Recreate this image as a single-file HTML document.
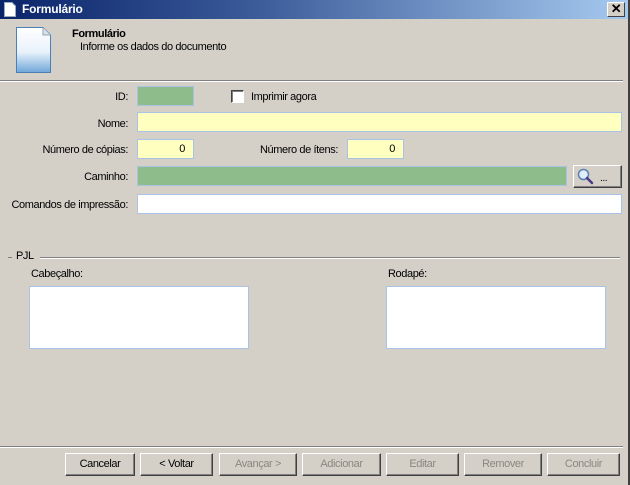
<!DOCTYPE html>
<html><head><meta charset="utf-8"><style>
*{margin:0;padding:0;box-sizing:border-box}
body{width:630px;height:485px;background:#d4d0c8;font-family:"Liberation Sans",sans-serif;font-size:11px;letter-spacing:-0.4px;color:#000;position:relative;overflow:hidden}
.a{position:absolute}
.t{position:absolute;white-space:nowrap;line-height:13px}
.r{text-align:right}
.in{position:absolute;border:1px solid #a9c3e6;height:20px;text-align:right;padding-right:8px;line-height:18px}
.g{background:#8fbc8b}.y{background:#ffffc0}.w{background:#fff}
.btn{position:absolute;top:453px;height:23px;border:1px solid;border-color:#fff #404040 #404040 #fff;box-shadow:inset -1px -1px 0 #808080;text-align:center;line-height:20px}
.dis{color:#8a8780}
</style></head><body>
<div class="a" style="left:0;top:0;width:630px;height:19px;background:linear-gradient(90deg,#0a246a,#3a5a98 40%,#a6caf0)"></div>
<svg class="a" style="left:4px;top:2px" width="12" height="15"><path d="M0.5 0.5H8L11.5 4V14.5H0.5Z" fill="#fff" stroke="#9ab"/></svg>
<div class="t" style="left:22px;top:3px;color:#fff;font-weight:bold;font-size:12px;letter-spacing:-0.2px">Formulário</div>
<div class="a" style="left:607px;top:2px;width:18px;height:15px;background:#d4d0c8;border:1px solid;border-color:#fff #404040 #404040 #fff;text-align:center;font-size:13px;line-height:12px;font-weight:bold">✕</div>
<div class="a" style="left:628px;top:0;width:2px;height:485px;background:#404040"></div>
<svg class="a" style="left:15px;top:26px" width="38" height="48"><defs><linearGradient id="d" x1="0" y1="0" x2="0" y2="1"><stop offset="0" stop-color="#fff"/><stop offset=".55" stop-color="#e8f2fb"/><stop offset="1" stop-color="#6fa6d8"/></linearGradient></defs><path d="M1.5 1.5H28L35.5 9V46.5H1.5Z" fill="url(#d)" stroke="#4a7fb8"/><path d="M28 1.5V9H35.5" fill="#dde" stroke="#8aa"/></svg>
<div class="t" style="left:72px;top:28px;font-weight:bold">Formulário</div>
<div class="t" style="left:80px;top:41px">Informe os dados do documento</div>
<div class="a" style="left:0;top:80px;width:623px;height:1px;background:#808080"></div>
<div class="a" style="left:0;top:81px;width:623px;height:1px;background:#fff"></div>

<div class="t r" style="left:0;width:128px;top:91px">ID:</div>
<div class="in g" style="left:137px;top:86px;width:57px"></div>
<div class="a" style="left:231px;top:90px;width:13px;height:13px;background:#fff;border:1px solid;border-color:#404040 #fff #fff #404040;box-shadow:inset 1px 1px 0 #808080"></div>
<div class="t" style="left:251px;top:91px">Imprimir agora</div>

<div class="t r" style="left:0;width:128px;top:118px">Nome:</div>
<div class="in y" style="left:137px;top:112px;width:485px"></div>

<div class="t r" style="left:0;width:128px;top:144px">Número de cópias:</div>
<div class="in y" style="left:137px;top:139px;width:57px">0</div>
<div class="t r" style="left:200px;width:138px;top:144px">Número de ítens:</div>
<div class="in y" style="left:347px;top:139px;width:57px">0</div>

<div class="t r" style="left:0;width:128px;top:171px">Caminho:</div>
<div class="in g" style="left:137px;top:166px;width:430px"></div>
<div class="a" style="left:573px;top:165px;width:49px;height:23px;border:1px solid;border-color:#fff #404040 #404040 #fff;box-shadow:inset -1px -1px 0 #808080"></div>
<svg class="a" style="left:577px;top:168px" width="18" height="17"><circle cx="6.5" cy="6.5" r="5" fill="#dfeefc" stroke="#5a7fb0" stroke-width="1.5"/><path d="M10 10L15 15" stroke="#4a3a8a" stroke-width="2.5" stroke-linecap="round"/></svg>
<div class="t" style="left:600px;top:172px;font-size:10px">...</div>

<div class="t r" style="left:0;width:128px;top:199px">Comandos de impressão:</div>
<div class="in w" style="left:137px;top:194px;width:485px"></div>

<div class="a" style="left:8px;top:257px;width:4px;height:1px;background:#808080"></div>
<div class="a" style="left:40px;top:257px;width:580px;height:1px;background:#808080"></div>
<div class="a" style="left:40px;top:258px;width:580px;height:1px;background:#fff"></div>
<div class="t" style="left:16px;top:250px">PJL</div>
<div class="t" style="left:31px;top:268px">Cabeçalho:</div>
<div class="in w" style="left:29px;top:286px;width:220px;height:63px"></div>
<div class="t" style="left:388px;top:268px">Rodapé:</div>
<div class="in w" style="left:386px;top:286px;width:220px;height:63px"></div>

<div class="a" style="left:0;top:446px;width:623px;height:1px;background:#808080"></div>
<div class="a" style="left:0;top:447px;width:623px;height:1px;background:#fff"></div>
<div class="btn" style="left:65px;width:70px">Cancelar</div>
<div class="btn" style="left:140px;width:73px">&lt; Voltar</div>
<div class="btn dis" style="left:219px;width:78px">Avançar &gt;</div>
<div class="btn dis" style="left:302px;width:79px">Adicionar</div>
<div class="btn dis" style="left:386px;width:73px">Editar</div>
<div class="btn dis" style="left:464px;width:78px">Remover</div>
<div class="btn dis" style="left:547px;width:73px">Concluir</div>
</body></html>
